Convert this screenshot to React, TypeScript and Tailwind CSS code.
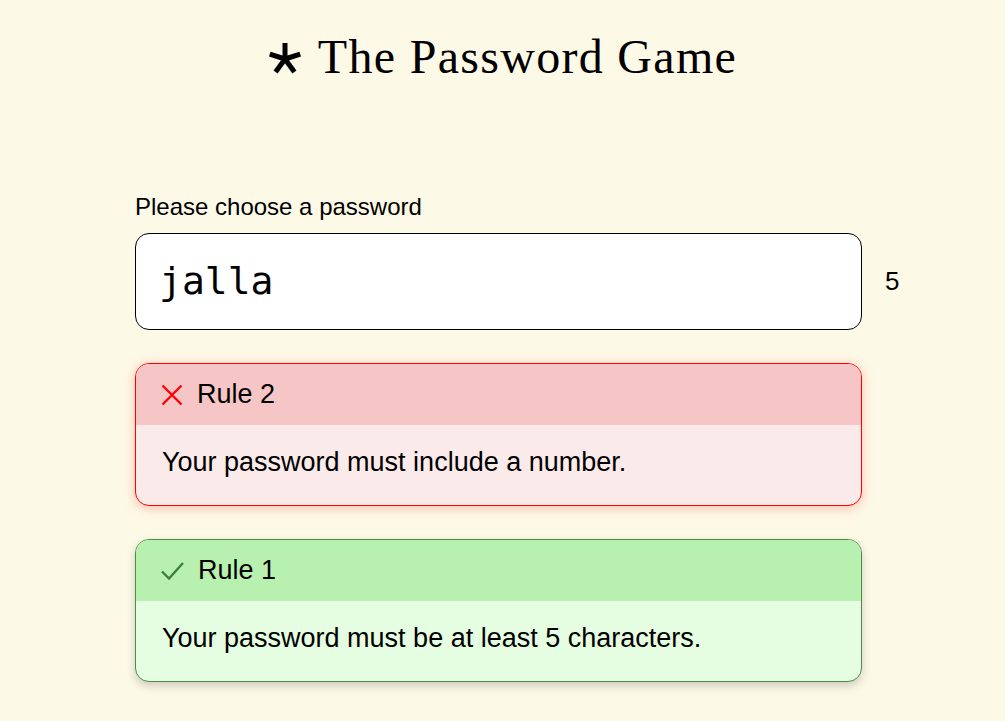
type Rule = { num: number; text: string; ok: boolean };

const rules: Rule[] = [
  { num: 2, text: "Your password must include a number.", ok: false },
  { num: 1, text: "Your password must be at least 5 characters.", ok: true },
];

function Asterisk() {
  // five-armed heavy asterisk used as the logo
  const arms = [0, 72, 144, 216, 288];
  return (
    <svg width="34" height="34" viewBox="-17 -17 34 34" className="mt-[14px] shrink-0">
      {arms.map((a) => (
        <line key={a} x1="0" y1="0" x2="0" y2="-16" stroke="#000" strokeWidth="5" transform={`rotate(${a})`} />
      ))}
    </svg>
  );
}

function CrossIcon() {
  return (
    <svg width="22" height="22" viewBox="0 0 22 22" className="shrink-0">
      <path d="M1.5 1.5 L20.5 20.5 M20.5 1.5 L1.5 20.5" stroke="#ff0000" strokeWidth="2.3" fill="none" />
    </svg>
  );
}

function CheckIcon() {
  return (
    <svg width="23" height="20" viewBox="0 0 23 20" className="shrink-0">
      <path d="M1 10.5 L8 17.5 L22 2" stroke="#3f7f3c" strokeWidth="2.4" fill="none" />
    </svg>
  );
}

function RuleBox({ rule }: { rule: Rule }) {
  return (
    <div
      className={
        rule.ok
          ? "overflow-hidden rounded-[14px] border border-[#4f8a4b] bg-[#e5fde0] shadow-[0_4px_10px_rgba(0,0,0,0.18)]"
          : "overflow-hidden rounded-[14px] border border-[#ff0000] bg-[#fbeaea] shadow-[0_2px_12px_rgba(255,80,60,0.35)]"
      }
    >
      <div
        className={
          rule.ok
            ? "flex h-[61px] items-center gap-[14px] bg-[#b8f0b0] pl-[25px] text-[27px] text-black"
            : "flex h-[61px] items-center gap-[14px] bg-[#f6c5c5] pl-[25px] text-[27px] text-black"
        }
      >
        {rule.ok ? <CheckIcon /> : <CrossIcon />}
        <span>Rule {rule.num}</span>
      </div>
      <div className="flex h-[80px] items-center px-[26px] pb-[6px] text-[27px] text-black">{rule.text}</div>
    </div>
  );
}

export default function App() {
  return (
    <div className="min-h-[721px] bg-[#fdf9e7] font-['Liberation_Sans',Arial,sans-serif]">
      <div className="flex h-[81px] items-start justify-center gap-[16px] pt-[28px]">
        <Asterisk />
        <h1 className="mt-[5px] font-['Liberation_Serif','Times_New_Roman',serif] text-[48px] leading-none tracking-[1.3px] text-black">
          The Password Game
        </h1>
      </div>

      <div className="mx-auto mt-[108px] w-[727px] translate-x-[-4px]">
        <div className="mb-[8px] text-[24px] text-black">Please choose a password</div>
        <div className="flex items-center">
          <div className="flex h-[97px] w-[727px] shrink-0 items-center rounded-[14px] border border-black bg-white px-[23px]">
            <span className="font-['DejaVu_Sans_Mono','Liberation_Mono',monospace] text-[38px] text-black">jalla</span>
          </div>
          <div className="ml-[23px] text-[26px] text-black">5</div>
        </div>

        <div className="mt-[33px] flex flex-col gap-[33px]">
          {rules.map((r) => (
            <RuleBox key={r.num} rule={r} />
          ))}
        </div>
      </div>
    </div>
  );
}
